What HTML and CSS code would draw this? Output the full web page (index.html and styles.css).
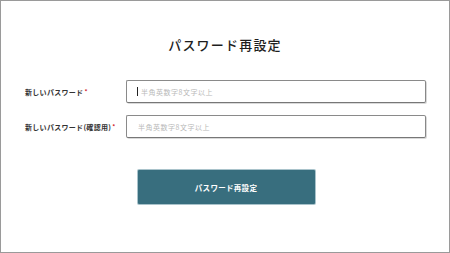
FILE: index.html
```html
<!DOCTYPE html>
<html lang="ja">
<head>
<meta charset="utf-8">
<title>パスワード再設定</title>
<link rel="stylesheet" href="styles.css">
</head>
<body>
<div class="frame">
  <h1 class="title">パスワード再設定</h1>
  <form class="form">
    <div class="row">
      <label class="label" for="pw1">新しいパスワード<span class="req">*</span></label>
      <div class="field">
        <input id="pw1" class="input" type="password" placeholder="半角英数字8文字以上">
        <span class="caret"></span>
      </div>
    </div>
    <div class="row">
      <label class="label" for="pw2">新しいパスワード(確認用)<span class="req">*</span></label>
      <div class="field">
        <input id="pw2" class="input" type="password" placeholder="半角英数字8文字以上">
      </div>
    </div>
    <div class="actions">
      <button type="button" class="btn">パスワード再設定</button>
    </div>
  </form>
</div>
</body>
</html>
```
FILE: styles.css
```css
* { box-sizing: border-box; }
html, body { margin: 0; padding: 0; background: #fff; }
body {
  font-family: "Noto Sans CJK JP", "Noto Sans", sans-serif;
  color: #333;
}
.frame {
  width: 450px;
  height: 253px;
  border: 1px solid #9a9a9a;
  padding-top: 34px;
}
.title {
  margin: 0;
  text-align: center;
  font-family: "Noto Sans CJK JP", serif;
  font-weight: 500;
  font-size: 13px;
  line-height: 20px;
  letter-spacing: 1.2px;
  color: #1e1e1e;
}
.form {
  margin-top: 25px;
  padding: 0 23px 0 24px;
}
.row {
  display: flex;
  align-items: center;
  margin-bottom: 12px;
}
.label {
  width: 101px;
  flex: none;
  font-size: 7px;
  font-weight: 700;
  color: #333;
  letter-spacing: 0.3px;
}
.req {
  color: #d0212a;
  font-size: 6px;
  margin-left: 1px;
  vertical-align: 1px;
}
.field {
  position: relative;
  flex: 1;
}
.input {
  display: block;
  width: 100%;
  height: 23px;
  margin: 0;
  border: 1px solid #8a8a8a;
  border-bottom-color: #777;
  border-right-color: #888;
  border-radius: 2px;
  box-shadow: 1px 1px 0 rgba(0,0,0,0.15);
  padding: 0 0 0 11px;
  font-family: "Noto Sans CJK JP", sans-serif;
  font-size: 7px;
  letter-spacing: 0.5px;
  outline: none;
  background: #fff;
}
.input::placeholder { color: #b9b9b9; }
#pw1 { padding-left: 14px; }
.caret {
  position: absolute;
  left: 11px;
  top: 7px;
  width: 1px;
  height: 9px;
  background: #222;
}
.actions {
  display: flex;
  justify-content: center;
  padding-top: 20px;
  padding-left: 1px;
}
.btn {
  width: 177px;
  height: 34px;
  border: 0;
  border-radius: 1px;
  background: #386e7e;
  color: #fff;
  font-family: "Noto Sans CJK JP", sans-serif;
  font-weight: 700;
  font-size: 7.5px;
  letter-spacing: 0.3px;
  box-shadow: 0 0 0 1px #a9c3cb;
}
```
